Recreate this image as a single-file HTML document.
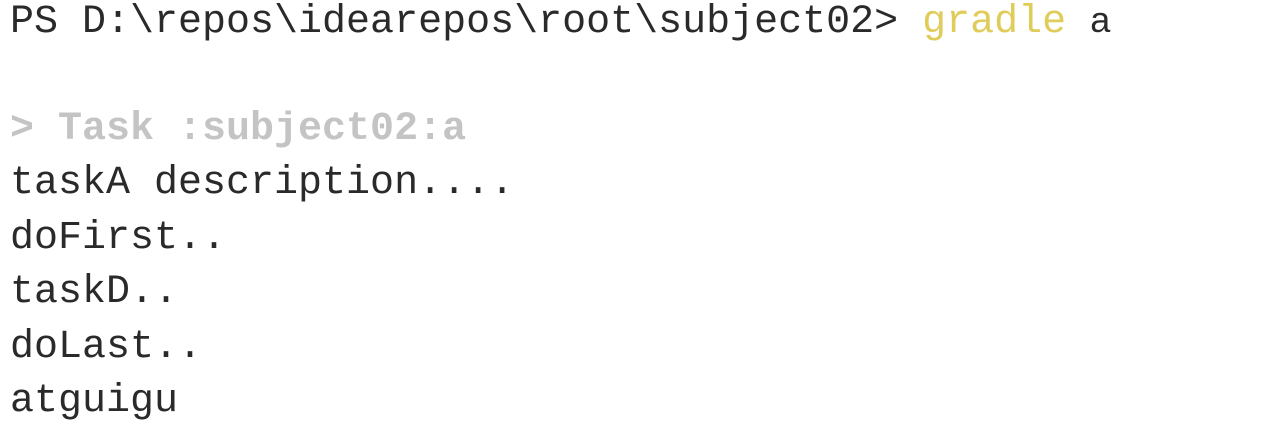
<!DOCTYPE html>
<html><head><meta charset="utf-8"><style>
html,body{margin:0;padding:0;background:#fff;width:1284px;height:438px;overflow:hidden}
.l{position:absolute;left:10px;font-family:"Liberation Mono",monospace;font-size:40px;line-height:40px;color:#2a2a2a;white-space:pre}
.g{color:#e0cc5a}
.t{color:#c4c4c4;font-weight:bold}
.a{font-family:"Liberation Sans",sans-serif;font-size:36px}
</style></head><body>
<div class="l" style="top:0px">PS D:\repos\idearepos\root\subject02&gt; <span class="g">gradle</span> <span class="a">a</span></div>
<div class="l t" style="top:110px">&gt; Task :subject02:a</div>
<div class="l" style="top:164px">taskA description....</div>
<div class="l" style="top:219px">doFirst..</div>
<div class="l" style="top:273px">taskD..</div>
<div class="l" style="top:328px">doLast..</div>
<div class="l" style="top:382px">atguigu</div>
</body></html>
